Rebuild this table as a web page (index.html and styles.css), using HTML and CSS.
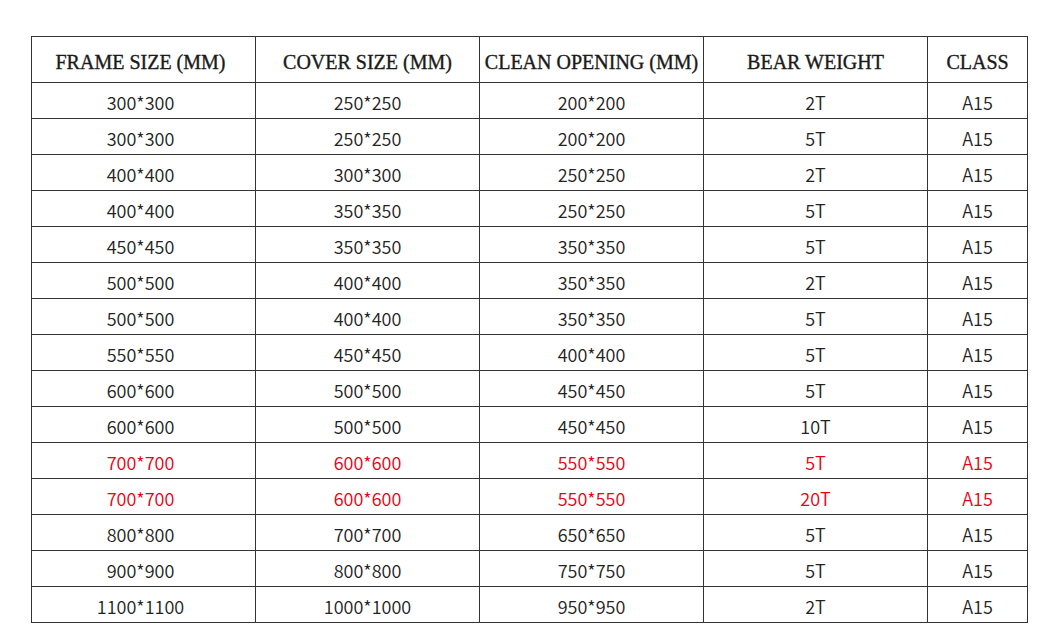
FILE: index.html
```html
<!DOCTYPE html>
<html>
<head>
<meta charset="utf-8">
<link rel="stylesheet" href="styles.css">
</head>
<body>
<div class="wrap">
<table class="spec">
<thead>
<tr><th class="c0">FRAME SIZE (MM)</th><th class="c1">COVER SIZE (MM)</th><th class="c1">CLEAN OPENING (MM)</th><th class="c1">BEAR WEIGHT</th><th class="c5">CLASS</th></tr>
</thead>
<tbody>
<tr><td>300*300</td><td>250*250</td><td>200*200</td><td>2T</td><td>A15</td></tr>
<tr><td>300*300</td><td>250*250</td><td>200*200</td><td>5T</td><td>A15</td></tr>
<tr><td>400*400</td><td>300*300</td><td>250*250</td><td>2T</td><td>A15</td></tr>
<tr><td>400*400</td><td>350*350</td><td>250*250</td><td>5T</td><td>A15</td></tr>
<tr><td>450*450</td><td>350*350</td><td>350*350</td><td>5T</td><td>A15</td></tr>
<tr><td>500*500</td><td>400*400</td><td>350*350</td><td>2T</td><td>A15</td></tr>
<tr><td>500*500</td><td>400*400</td><td>350*350</td><td>5T</td><td>A15</td></tr>
<tr><td>550*550</td><td>450*450</td><td>400*400</td><td>5T</td><td>A15</td></tr>
<tr><td>600*600</td><td>500*500</td><td>450*450</td><td>5T</td><td>A15</td></tr>
<tr><td>600*600</td><td>500*500</td><td>450*450</td><td>10T</td><td>A15</td></tr>
<tr class="hl"><td>700*700</td><td>600*600</td><td>550*550</td><td>5T</td><td>A15</td></tr>
<tr class="hl"><td>700*700</td><td>600*600</td><td>550*550</td><td>20T</td><td>A15</td></tr>
<tr><td>800*800</td><td>700*700</td><td>650*650</td><td>5T</td><td>A15</td></tr>
<tr><td>900*900</td><td>800*800</td><td>750*750</td><td>5T</td><td>A15</td></tr>
<tr><td>1100*1100</td><td>1000*1000</td><td>950*950</td><td>2T</td><td>A15</td></tr>
</tbody>
</table>
</div>
</body>
</html>
```
FILE: styles.css
```css
html, body { margin: 0; padding: 0; background: #fff; }
.wrap { padding: 36px 0 0 31px; }
.spec {
  border-collapse: collapse;
  table-layout: fixed;
  width: 996px;
  color: #222;
}
.spec th, .spec td {
  border: 1px solid #333;
  text-align: center;
  padding: 0;
  white-space: nowrap;
}
.spec th {
  height: 39px;
  padding-top: 6px;
  font-family: "Liberation Serif", "DejaVu Serif", serif;
  font-weight: normal;
  font-size: 20px;
  color: #1a1a1a;
  -webkit-text-stroke: 0.35px #1a1a1a;
}
.c0 { width: 217px; }
.c1 { width: 223px; }
.c5 { width: 99px; }
.spec td {
  height: 33px;
  padding-top: 2px;
  font-family: "Noto Sans CJK SC", "Noto Sans", sans-serif;
  font-weight: 350;
  font-size: 18px;
  line-height: 24px;
  color: #222;
}
.spec th:first-child, .spec td:first-child { padding-right: 6px; }
.spec tr.hl td { color: #e60012; }
```
